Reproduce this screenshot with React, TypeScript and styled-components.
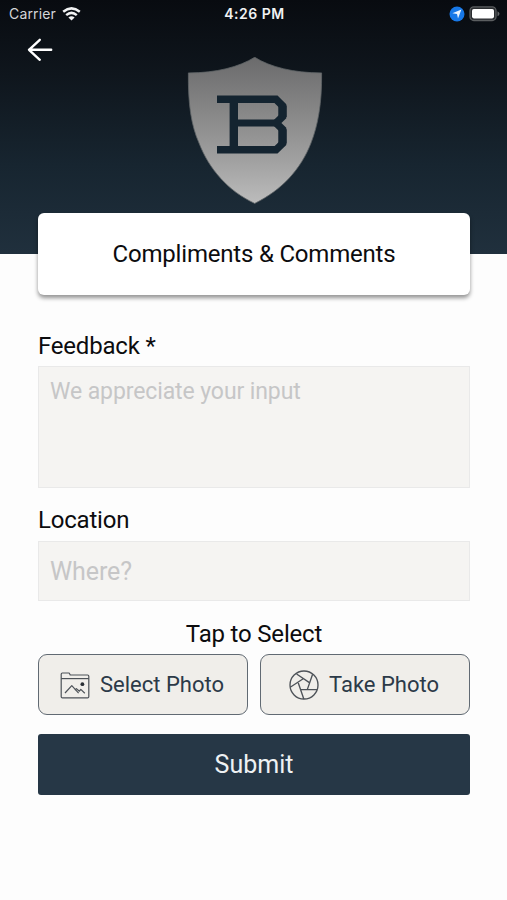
import React from "react";
import styled, { createGlobalStyle } from "styled-components";

const GlobalStyle = createGlobalStyle`
  *, *::before, *::after { box-sizing: border-box; }
  body { margin: 0; background: #fdfdfd; }
  button, input, textarea { font: inherit; letter-spacing: inherit; }
`;

const Screen = styled.div`
  width: 507px;
  height: 900px;
  overflow: hidden;
  background: #fdfdfd;
  color: #0c0c0e;
  font-family: Roboto, "Liberation Sans", sans-serif;
  font-size: 24px;
  line-height: 28px;
`;

const Hero = styled.header`
  height: 254px;
  display: flex;
  flex-direction: column;
  background: linear-gradient(#080b10 0%, #0f161d 30%, #172530 65%, #20303d 100%);
`;

const StatusBar = styled.div`
  height: 28px;
  padding: 0 7px 0 9px;
  display: grid;
  grid-template-columns: 1fr auto 1fr;
  align-items: center;
  font-family: Inter, sans-serif;
  font-size: 14px;
  line-height: 28px;
  color: #d4d6d8;
`;

const Carrier = styled.div`
  display: flex;
  align-items: center;
  gap: 6px;
  letter-spacing: 0.15px;
`;

const Clock = styled.div`
  color: #f1f2f3;
  font-weight: 600;
  letter-spacing: 0.5px;
`;

const Indicators = styled.div`
  display: flex;
  justify-content: flex-end;
  align-items: center;
  gap: 4px;
`;

const NavRow = styled.div`
  height: 29px;
  padding: 10px 0 0 27px;
`;

const BackButton = styled.button`
  display: block;
  width: 27px;
  height: 24px;
  padding: 0;
  border: 0;
  background: none;
`;

const Emblem = styled.svg`
  display: block;
  width: 136px;
  height: 148px;
  margin-left: 187px;
`;

const TitleCard = styled.h1`
  height: 82px;
  margin: -41px 37px 0 38px;
  display: flex;
  align-items: center;
  justify-content: center;
  position: relative;
  border-radius: 6px;
  background: #fff;
  box-shadow: 0 3px 4px rgba(0, 0, 0, 0.42);
  font-size: 24px;
  font-weight: 400;
  letter-spacing: -0.2px;
`;

const Form = styled.form`
  padding: 37px 37px 0 38px;
  display: flex;
  flex-direction: column;
`;

const Label = styled.label<{ $gap?: number }>`
  height: 28px;
  margin-top: ${(p) => p.$gap ?? 0}px;
  letter-spacing: -0.2px;
`;

const Comment = styled.textarea`
  height: 122px;
  margin: 6px 0 0;
  padding: 11px 11px;
  resize: none;
  border: 1px solid #e9e9e9;
  border-radius: 0;
  background: #f5f4f2;
  outline: none;
  font-size: 23px;
  letter-spacing: -0.1px;
  &::placeholder { color: #c6c6c7; opacity: 1; }
`;

const Place = styled.input`
  height: 60px;
  margin-top: 7px;
  padding: 0 11px;
  border: 1px solid #e9e9e9;
  border-radius: 0;
  background: #f5f4f2;
  outline: none;
  font-size: 25px;
  letter-spacing: -0.1px;
  &::placeholder { color: #c6c6c7; opacity: 1; }
`;

const Hint = styled.p`
  height: 28px;
  margin: 19px 0 0;
  text-align: center;
  letter-spacing: -0.18px;
`;

const PhotoActions = styled.div`
  display: grid;
  grid-template-columns: 1fr 1fr;
  gap: 12px;
  margin-top: 6px;
`;

const PhotoButton = styled.button<{ $indent: number }>`
  height: 61px;
  padding: 1px 0 0 ${(p) => p.$indent}px;
  display: flex;
  align-items: center;
  gap: 10px;
  border: 1.5px solid #616a73;
  border-radius: 9px;
  background: #f0eeea;
  color: #2c3a48;
  font-size: 22px;
  white-space: nowrap;
`;

const SubmitButton = styled.button`
  height: 61px;
  margin-top: 19px;
  padding: 0;
  border: 0;
  border-radius: 3px;
  background: #263746;
  color: #eef1f3;
  font-size: 25px;
`;

const WifiIcon = () => (
  <svg width="19" height="15" viewBox="0 0 19 15" fill="none" stroke="#f1f2f3" strokeWidth="2.5">
    <path d="M1.2 4.7Q9.5-2 17.8 4.7" />
    <path d="M4.2 8.1Q9.5 3.6 14.8 8.1" />
    <path d="M9.5 13.5 6.4 10.5Q9.5 8.1 12.6 10.5Z" fill="#f1f2f3" stroke="none" />
  </svg>
);

const LocationIcon = () => (
  <svg width="16" height="16" viewBox="0 0 16 16">
    <circle cx="8" cy="8" r="7.5" fill="#1778e8" />
    <path d="M12.4 3.6 9 12.5 8 8.1 3.4 7.2Z" fill="#eaf4ff" />
  </svg>
);

const BatteryIcon = () => (
  <svg width="31" height="16" viewBox="0 0 31 16">
    <rect x="1" y="0.9" width="26" height="13.6" rx="3.8" fill="#2a2d30" stroke="#5b5e60" strokeWidth="1.3" />
    <rect x="3" y="3" width="22" height="9.4" rx="1.8" fill="#fff" />
    <path d="M28.5 5.2Q30.5 6.2 30.5 7.7T28.5 10.2Z" fill="#66696b" />
  </svg>
);

const ArrowIcon = () => (
  <svg width="27" height="24" viewBox="0 0 27 24" fill="none" stroke="#fff" strokeWidth="2.4" strokeLinecap="round" strokeLinejoin="round">
    <path d="M24.2 11.8H2M12.8 1.8 2 11.8l10.8 10" />
  </svg>
);

const FolderIcon = () => (
  <svg width="30" height="27" viewBox="0 0 30 27" fill="none" stroke="#4d5258" strokeWidth="1.2" strokeLinejoin="round">
    <path d="M1.2 24.7V2.2Q1.2 1 2.4 1H8.6Q9.5 1 9.8 2L10.2 3H27.6Q28.8 3 28.8 4.2V24.7Q28.8 25.8 27.6 25.8H2.4Q1.2 25.8 1.2 24.7Z" />
    <path d="M1.2 6.6H28.8" />
    <path d="M5 21 11.8 13.6 18.6 21.2M14.8 18 16.4 16.6 19.4 19.2 20.8 17.4 24.8 21.2" />
    <circle cx="22.4" cy="12.2" r="1.9" fill="#292e34" stroke="none" />
  </svg>
);

const ApertureIcon = () => (
  <svg width="30" height="30" viewBox="0 0 30 30" fill="none" stroke="#4d5258" strokeWidth="1.35">
    <circle cx="15" cy="15" r="14" />
    <path d="M7.6 4 20.4 12.6M23.6 4.2 18.2 19.9M28 19.6H11.8M14.8 29 9.3 13M1.2 17.2 14.2 8.8" />
  </svg>
);

const ShieldLogo = () => (
  <Emblem viewBox="187 57 136 148">
    <defs>
      <linearGradient id="silver" x1="0" y1="0" x2="0" y2="1">
        <stop offset="0" stopColor="#6b6b6c" />
        <stop offset="0.35" stopColor="#858585" />
        <stop offset="0.7" stopColor="#a0a0a0" />
        <stop offset="1" stopColor="#bcbcbc" />
      </linearGradient>
    </defs>
    <path
      d="M254.7 57.3C239 67 216 73 188.4 72.9C188 103 191 125 199 143C209 169 228 191 254.7 203.4C282 190 301 169 311 143C318 125 322 103 321.6 72.9C294 73 270 67 254.7 57.3Z"
      fill="url(#silver)"
      stroke="#606467"
      strokeWidth="0.8"
    />
    <g fill="none" stroke="#142430">
      <path strokeWidth="7.4" d="M217 99.3H276L282.6 105.8V116.6L276 123L282.6 129.4V143.4L276 149.8H217" />
      <path strokeWidth="8.4" d="M233.8 99V150M282.5 105.5V117M282.5 129.2V143.6" />
      <path strokeWidth="6.8" d="M237 123H278" />
    </g>
  </Emblem>
);

export default function App() {
  return (
    <Screen>
      <GlobalStyle />
      <Hero>
        <StatusBar>
          <Carrier>
            <span>Carrier</span>
            <WifiIcon />
          </Carrier>
          <Clock>4:26 PM</Clock>
          <Indicators>
            <LocationIcon />
            <BatteryIcon />
          </Indicators>
        </StatusBar>
        <NavRow>
          <BackButton aria-label="Back">
            <ArrowIcon />
          </BackButton>
        </NavRow>
        <ShieldLogo />
      </Hero>
      <TitleCard>Compliments &amp; Comments</TitleCard>
      <Form onSubmit={(e) => e.preventDefault()}>
        <Label htmlFor="feedback">Feedback *</Label>
        <Comment id="feedback" placeholder="We appreciate your input" />
        <Label htmlFor="location" $gap={18}>Location</Label>
        <Place id="location" placeholder="Where?" />
        <Hint>Tap to Select</Hint>
        <PhotoActions>
          <PhotoButton type="button" $indent={21}>
            <FolderIcon />
            Select Photo
          </PhotoButton>
          <PhotoButton type="button" $indent={28}>
            <ApertureIcon />
            Take Photo
          </PhotoButton>
        </PhotoActions>
        <SubmitButton type="submit">Submit</SubmitButton>
      </Form>
    </Screen>
  );
}
